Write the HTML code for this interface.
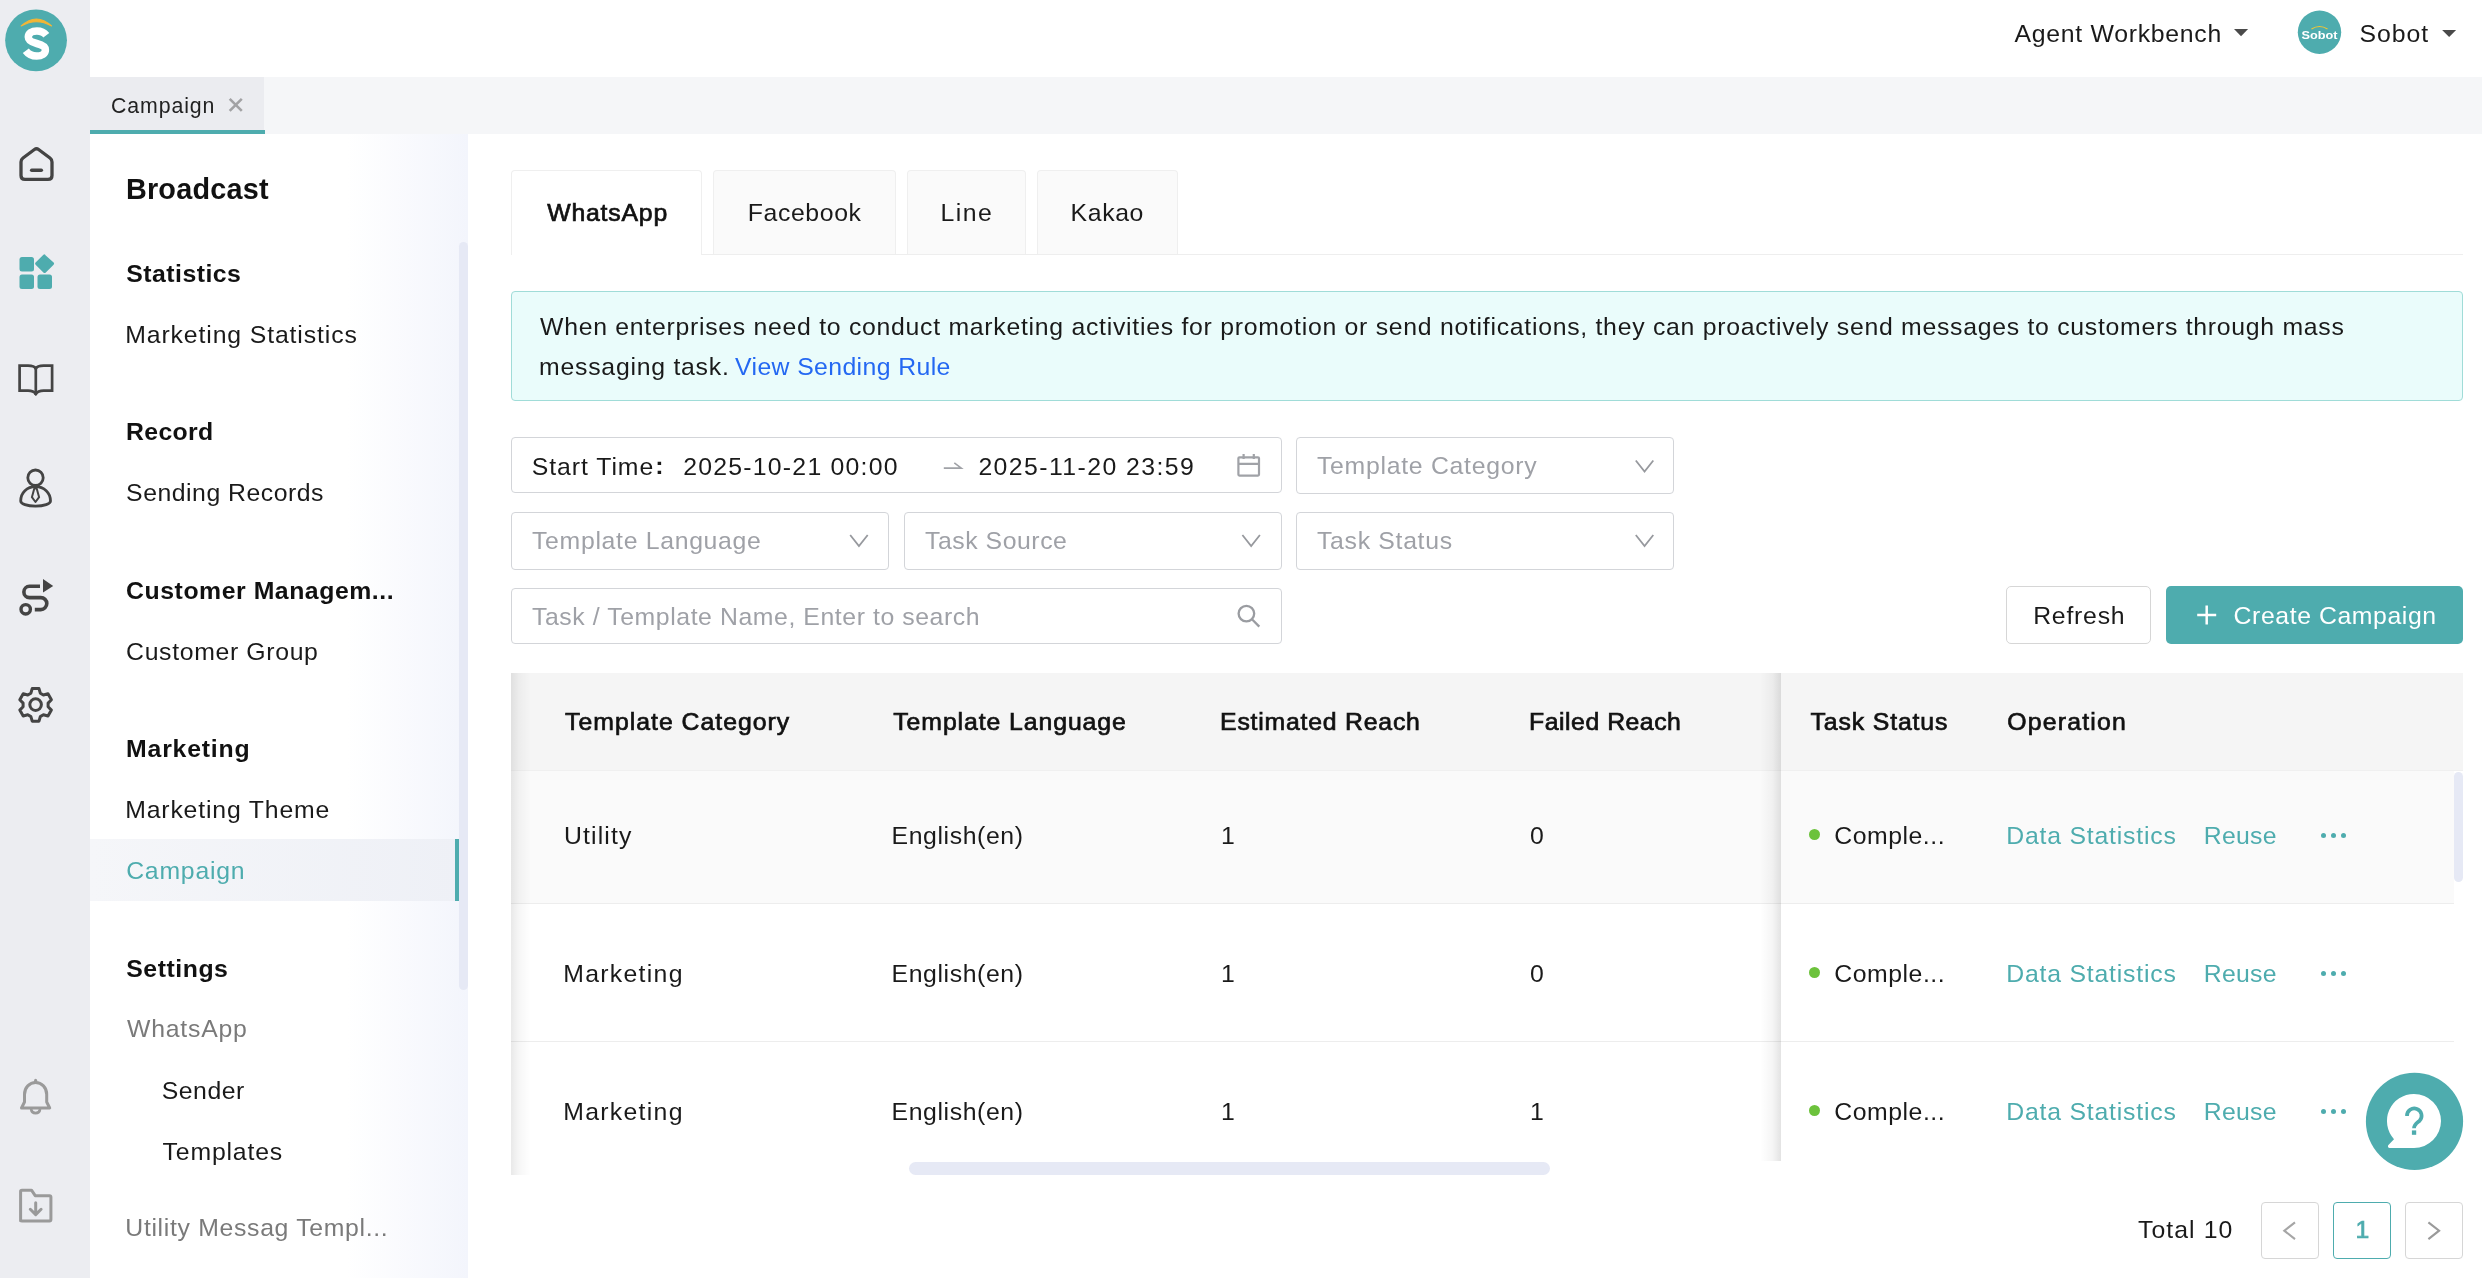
<!DOCTYPE html>
<html lang="en">
<head>
<meta charset="utf-8">
<title>Campaign - Broadcast</title>
<style>
*{box-sizing:border-box;margin:0;padding:0}
html,body{width:2482px;height:1278px;overflow:hidden;background:#fff}
body{font-family:"Liberation Sans",sans-serif;position:relative;color:#1a1a1a}
.abs,.t,.box,svg.ic{position:absolute}
.t{white-space:nowrap;line-height:1;display:block}
#rail{left:0;top:0;width:90px;height:1278px;background:#ecedf1}
#topbar{left:90px;top:0;width:2392px;height:77px;background:#fff}
#pagetabs{left:90px;top:77px;width:2392px;height:57px;background:#f5f6f8}
#pagetab{left:0;top:0;width:174px;height:53px;background:#ebecf0}
#pagetab:after{content:"";position:absolute;left:0;top:53px;width:175px;height:4px;background:#4eacae}
#sidebar{left:90px;top:134px;width:378px;height:1144px;background:linear-gradient(90deg,#fff 0%,#fff 68%,#f3f5fc 100%)}
#sb-active{left:0;top:705px;width:369px;height:62px;background:linear-gradient(90deg,#f5f6f9 0%,#eef0f6 100%)}
#sb-active:after{content:"";position:absolute;right:0;top:0;width:4px;height:62px;background:#4eacae}
#sb-scroll{left:369px;top:108px;width:9px;height:748px;border-radius:5px;background:#e6e9f5}
#main{left:468px;top:134px;width:2014px;height:1144px;background:#fff}
.ctab{top:170px;height:84px;border:1px solid #efefef;border-bottom:none;border-radius:4px 4px 0 0;background:#fafafa}
.ctab.on{background:#fff;height:85px}
#ctabline{left:511px;top:254px;width:1952px;height:1px;background:#eeeeee}
#alert{left:511px;top:291px;width:1952px;height:110px;background:#eafcfb;border:1px solid #a0dcd8;border-radius:4px}
.inp{border:1px solid #d3d5d9;border-radius:4px;background:#fff;height:56px}
.btn{border-radius:5px;height:58px;top:586px}
#thead{left:511px;top:673px;width:1952px;height:97.5px;background:#f5f5f5}
.row{left:511px;width:1943px;border-bottom:1px solid #ededed}
.dot{width:11.200px;height:11.200px;border-radius:50%;background:#6cc23c}
.more i{position:absolute;width:5px;height:5px;border-radius:50%;background:#4eacae;top:0}
.pg{top:1202px;width:58px;height:57px;border:1px solid #d6d6d6;border-radius:4px;background:#fff}
</style>
</head>
<body>
<div id="page">

<!-- ============ left icon rail ============ -->
<nav id="rail" class="abs">
<svg class="ic" style="left:0;top:0" width="90" height="1278" viewBox="0 0 90 1278" fill="none" stroke-linecap="round" stroke-linejoin="round">
  <!-- logo -->
  <circle cx="36.050" cy="40.350" r="30.900" fill="#4eacae"/>
  <path d="M21.200 26 Q36.400 12 51.600 26 Q36.400 17.400 21.200 26 Z" fill="#f2b635" stroke="#f2b635" stroke-width="1.100" stroke-linejoin="round"/>
  <path d="M46.300 35.200 C44 32.200 40.800 30.900 36.900 30.900 C31.800 30.900 28.300 33.400 28.300 37.100 C28.300 40.900 31.500 42.300 36.700 43.500 C42.100 44.800 45.400 46.300 45.400 50 C45.400 53.800 41.800 56.100 36.700 56.100 C32.100 56.100 28.300 54.200 25.800 50.800" stroke="#fff" stroke-width="7.500" stroke-linecap="butt" fill="none"/>
  <!-- home -->
  <g stroke="#444" stroke-width="3.3" transform="translate(0 0.900)">
    <path d="M21 161 L21 174.500 Q21 178.500 25 178.500 L48 178.500 Q52 178.500 52 174.500 L52 161 Q52 158.600 50 157.100 L38.600 148.600 Q36.500 147.100 34.400 148.600 L23 157.100 Q21 158.600 21 161 Z"/>
    <path d="M31.700 169.300 H41.300" stroke-width="3.600"/>
  </g>
  <!-- apps (active) -->
  <g fill="#4eacae" transform="translate(0 0.500)">
    <rect x="19.5" y="256.5" width="14.5" height="14.5" rx="2.5"/>
    <rect x="19.5" y="274" width="14.5" height="14.5" rx="2.5"/>
    <rect x="37.5" y="274" width="14.5" height="14.5" rx="2.5"/>
    <path d="M44.6 254 L53.6 262 Q54.6 263.1 53.6 264.2 L45.8 272 Q44.6 273 43.4 272 L35.6 264.2 Q34.6 263.1 35.6 262 L43.4 254.3 Q44.6 253.3 45.8 254.3 Z" transform="translate(0 0)"/>
  </g>
  <!-- book -->
  <g stroke="#444" stroke-width="2.700" stroke-linejoin="miter">
    <path d="M35.800 368.600 C34.800 366.600 32 365.700 28 365.700 H19.600 V390.600 H28 C32 390.600 34.300 391.600 35.800 394"/>
    <path d="M35.800 368.600 C36.800 366.600 39.600 365.700 43.600 365.700 H52.100 V390.600 H43.600 C39.600 390.600 37.300 391.600 35.800 394"/>
    <path d="M35.800 368.600 V394"/>
  </g>
  <!-- customer -->
  <g stroke="#444" stroke-width="2.800">
    <circle cx="35.500" cy="477.700" r="7.700"/>
    <path d="M20.700 501 C20.700 492.500 27 486.700 35.500 486.700 C44 486.700 50.500 492.500 50.500 501 C50.500 503.800 44 506.200 35.500 506.200 C27 506.200 20.700 503.800 20.700 501 Z"/>
    <path d="M34.300 488.600 H36.700 L39.100 497.200 L35.500 502 L31.900 497.200 Z" stroke-width="2"/>
  </g>
  <!-- flow -->
  <g stroke="#444" stroke-width="3.600">
    <path d="M40 586.300 H29.500 A5.650 5.650 0 0 0 29.500 597.600 H40.800 A6 6 0 0 1 40.800 609.600 H34.800" stroke-linecap="butt"/>
    <circle cx="25.700" cy="609.300" r="4.700" stroke-width="3.400"/>
    <path d="M43 579 L53.200 586 L43 592.400 Z" fill="#444" stroke="none"/>
  </g>
  <!-- settings gear -->
  <g stroke="#444" stroke-width="3">
    <circle cx="35.6" cy="704.6" r="5.8"/>
    <path d="M32.2 688.6 h6.8 l1.3 4.6 l3.1 1.8 l4.6 -1.2 l3.4 5.9 l-3.3 3.4 v3.6 l3.3 3.4 l-3.4 5.9 l-4.6 -1.2 l-3.1 1.8 l-1.3 4.6 h-6.8 l-1.3 -4.6 l-3.1 -1.8 l-4.6 1.2 l-3.4 -5.9 l3.3 -3.4 v-3.6 l-3.3 -3.4 l3.4 -5.9 l4.6 1.2 l3.1 -1.8 Z"/>
  </g>
  <!-- bell -->
  <g stroke="#9a9a9a" stroke-width="3">
    <path d="M21.5 1108 L24.5 1102 V1094.5 C24.5 1087.5 29.5 1082.5 35.6 1082.5 C41.700 1082.5 46.7 1087.5 46.7 1094.5 V1102 L49.700 1108 Z"/>
    <path d="M31.200 1109.500 C31.800 1114.300 39.400 1114.300 40 1109.500" stroke-width="2.600"/>
    <path d="M35.6 1080.3 V1081.5" stroke-width="3"/>
  </g>
  <!-- folder download -->
  <g stroke="#9a9a9a" stroke-width="3">
    <path d="M20.6 1220.700 V1191.5 Q20.6 1190.2 22 1190.2 H31.5 L35.2 1195.7 H49.5 Q50.9 1195.7 50.9 1197.1 V1219.500 Q50.9 1220.900 49.500 1220.900 H22 Q20.600 1220.900 20.600 1219.500"/>
    <path d="M35.700 1202.700 V1214.200 M30.300 1209.300 L35.700 1214.600 L41.100 1209.300"/>
  </g>
</svg>
</nav>

<!-- ============ top bar ============ -->
<header id="topbar" class="abs"></header>
<svg class="ic" style="left:2200px;top:0;will-change:transform" width="282" height="77" viewBox="2200 0 282 77">
  <path d="M2234 29.100 H2248.100 L2241.050 36.200 Z" fill="#4a4a4a"/>
  <path d="M2442.100 29.900 H2456.100 L2449.100 36.900 Z" fill="#4a4a4a"/>
  <circle cx="2319.500" cy="32.200" r="21.700" fill="#4eacae"/>
  <path d="M2311.500 29 Q2319.500 24 2327.500 29" stroke="#f2c631" stroke-width="1.2" fill="none"/>
  <text x="2319.500" y="38.800" text-anchor="middle" font-family="Liberation Sans, sans-serif" font-weight="700" font-size="11.600" fill="#fff" textLength="36" lengthAdjust="spacingAndGlyphs">Sobot</text>
</svg>

<!-- ============ page tabs ============ -->
<div id="pagetabs" class="abs"><div id="pagetab" class="abs"></div></div>
<svg class="ic" style="left:226px;top:95px" width="20" height="20" viewBox="0 0 20 20"><path d="M3.700 3.800 L15.800 15.900 M15.800 3.800 L3.700 15.900" stroke="#a2a2a4" stroke-width="2.600" stroke-linecap="butt"/></svg>

<!-- ============ sidebar ============ -->
<aside id="sidebar" class="abs">
  <div id="sb-active" class="abs"></div>
  <div id="sb-scroll" class="abs"></div>
</aside>

<!-- ============ main ============ -->
<main id="main" class="abs"></main>

<!-- channel tabs -->
<div id="ctabline" class="abs"></div>
<div class="ctab on abs" style="left:511px;width:191px"></div>
<div class="ctab abs" style="left:713px;width:183px"></div>
<div class="ctab abs" style="left:907px;width:119px"></div>
<div class="ctab abs" style="left:1037px;width:141px"></div>
<!-- alert -->
<div id="alert" class="abs"></div>
<!-- filters -->
<div class="inp abs" style="left:511px;top:437px;width:771px"></div>
<div class="inp abs" style="left:1296px;top:437px;width:378px;height:57px"></div>
<div class="inp abs" style="left:511px;top:512px;width:378px;height:58px"></div>
<div class="inp abs" style="left:904px;top:512px;width:378px;height:58px"></div>
<div class="inp abs" style="left:1296px;top:512px;width:378px;height:58px"></div>
<div class="inp abs" style="left:511px;top:588px;width:771px"></div>
<svg class="ic" style="left:500px;top:420px" width="1200" height="250" viewBox="500 420 1200 250" fill="none">
  <g stroke="#97999e" stroke-width="1.800">
    <path d="M1635.8 460.5 L1644.55 471.5 L1653.30 460.5" /><path d="M850.2 535 L858.95 546 L867.70 535" /><path d="M1242.4 535 L1251.15 546 L1259.90 535" /><path d="M1635.8 535 L1644.55 546 L1653.30 535" />
  </g>
  <!-- range arrow -->
  <path d="M943.800 468.100 H961.300 L954.300 462.900" stroke="#a0a2a7" stroke-width="1.600" stroke-linejoin="miter"/>
  <!-- calendar -->
  <g stroke="#a0a2a7" stroke-width="2.200">
    <rect x="1238.400" y="457.300" width="20.600" height="18.300" rx="1"/>
    <path d="M1238.400 463.800 H1259 M1243.600 454 V459 M1253.800 454 V459"/>
  </g>
  <!-- search -->
  <g stroke="#9a9ca1" stroke-width="2.300">
    <circle cx="1246.400" cy="613.600" r="7.800"/>
    <path d="M1252.200 619.500 L1259.300 626.600"/>
  </g>
</svg>
<!-- buttons -->
<div class="btn abs" style="left:2006px;width:144.5px;border:1px solid #d6d6d6;background:#fff"></div>
<div class="btn abs" style="left:2166px;width:297px;background:#4eacae"></div>
<svg class="ic" style="left:2196px;top:604px" width="22" height="22" viewBox="0 0 22 22"><path d="M1.200 11 H20.200 M10.700 1.500 V20.500" stroke="#fff" stroke-width="2.500"/></svg>
<!-- table -->
<div id="thead" class="abs"></div>
<div class="abs" style="left:511px;top:770px;width:1952px;height:1px;background:#f0f0f0"></div>
<div class="row abs" style="top:771px;height:133px;background:#fafafa"></div>
<div class="row abs" style="top:904px;height:138px"></div>
<!-- fixed-column shadows -->
<div class="abs" style="left:511px;top:673px;width:20px;height:502px;background:linear-gradient(90deg,rgba(0,0,0,.085),rgba(0,0,0,.035) 40%,rgba(0,0,0,0))"></div>
<div class="abs" style="left:1760px;top:673px;width:21px;height:487.500px;background:linear-gradient(270deg,rgba(0,0,0,.11),rgba(0,0,0,.04) 40%,rgba(0,0,0,0))"></div>
<!-- scrollbars -->
<div class="abs" style="left:2454px;top:772px;width:8.500px;height:110px;border-radius:4.500px;background:#e6e9f5"></div>
<div class="abs" style="left:909px;top:1161.500px;width:641px;height:13px;border-radius:6.500px;background:#e6e9f5"></div>
<!-- pagination -->
<div class="pg abs" style="left:2261px"></div>
<div class="pg abs" style="left:2333px;border-color:#4eacae"></div>
<div class="pg abs" style="left:2405px"></div>
<svg class="ic" style="left:2260px;top:1200px" width="210" height="62" viewBox="2260 1200 210 62" fill="none" stroke-width="2.100">
  <path d="M2295 1222.300 L2284.300 1230.700 L2295 1239.100" stroke="#a6a6a6"/>
  <path d="M2428.400 1222.300 L2439.100 1230.700 L2428.400 1239.100" stroke="#9a9a9a"/>
</svg>


<div id="txt" class="abs" style="left:0;top:0;width:2482px;height:1278px;will-change:transform">
<span class="t" style="left:2014.4px;top:22.03px;font-size:24.8px;font-weight:400;color:#1a1a1a;letter-spacing:0.727px;">Agent Workbench</span>
<span class="t" style="left:2359.5px;top:22.03px;font-size:24.8px;font-weight:400;color:#1a1a1a;letter-spacing:0.930px;">Sobot</span>
<span class="t" style="left:111.1px;top:96.03px;font-size:21.3px;font-weight:400;color:#222;letter-spacing:0.898px;">Campaign</span>
<span class="t" style="left:125.9px;top:175.03px;font-size:28.8px;font-weight:700;color:#111;letter-spacing:0.224px;">Broadcast</span>
<span class="t" style="left:126.2px;top:262.03px;font-size:24.8px;font-weight:700;color:#111;letter-spacing:0.494px;">Statistics</span>
<span class="t" style="left:125.2px;top:323.03px;font-size:24.8px;font-weight:400;color:#1a1a1a;letter-spacing:0.879px;">Marketing Statistics</span>
<span class="t" style="left:126.1px;top:420.03px;font-size:24.8px;font-weight:700;color:#111;letter-spacing:0.336px;">Record</span>
<span class="t" style="left:126.1px;top:481.03px;font-size:24.8px;font-weight:400;color:#1a1a1a;letter-spacing:0.514px;">Sending Records</span>
<span class="t" style="left:126.1px;top:579.03px;font-size:24.8px;font-weight:700;color:#111;letter-spacing:0.545px;">Customer Managem...</span>
<span class="t" style="left:126.1px;top:640.03px;font-size:24.8px;font-weight:400;color:#1a1a1a;letter-spacing:0.654px;">Customer Group</span>
<span class="t" style="left:126.1px;top:737.03px;font-size:24.8px;font-weight:700;color:#111;letter-spacing:0.797px;">Marketing</span>
<span class="t" style="left:125.2px;top:798.03px;font-size:24.8px;font-weight:400;color:#1a1a1a;letter-spacing:0.832px;">Marketing Theme</span>
<span class="t" style="left:126.2px;top:859.03px;font-size:24.8px;font-weight:400;color:#4eacae;letter-spacing:0.771px;">Campaign</span>
<span class="t" style="left:126.2px;top:957.03px;font-size:24.8px;font-weight:700;color:#111;letter-spacing:0.555px;">Settings</span>
<span class="t" style="left:127.0px;top:1017.03px;font-size:24.8px;font-weight:400;color:#7a7a7a;letter-spacing:0.785px;">WhatsApp</span>
<span class="t" style="left:161.7px;top:1079.03px;font-size:24.8px;font-weight:400;color:#1a1a1a;letter-spacing:0.539px;">Sender</span>
<span class="t" style="left:162.6px;top:1140.03px;font-size:24.8px;font-weight:400;color:#1a1a1a;letter-spacing:0.819px;">Templates</span>
<span class="t" style="left:125.3px;top:1216.03px;font-size:24.8px;font-weight:400;color:#7a7a7a;letter-spacing:0.674px;">Utility Messag Templ...</span>
<span class="t" style="left:547.2px;top:201.03px;font-size:24.8px;font-weight:400;color:#111;-webkit-text-stroke:0.7px #111;letter-spacing:0.802px;">WhatsApp</span>
<span class="t" style="left:747.7px;top:201.03px;font-size:24.8px;font-weight:400;color:#1a1a1a;letter-spacing:0.626px;">Facebook</span>
<span class="t" style="left:940.5px;top:201.03px;font-size:24.8px;font-weight:400;color:#1a1a1a;letter-spacing:1.456px;">Line</span>
<span class="t" style="left:1070.6px;top:201.03px;font-size:24.8px;font-weight:400;color:#1a1a1a;letter-spacing:0.621px;">Kakao</span>
<span class="t" style="left:540.0px;top:315.03px;font-size:24.8px;font-weight:400;color:#1a1a1a;letter-spacing:0.724px;">When enterprises need to conduct marketing activities for promotion or send notifications, they can proactively send messages to customers through mass</span>
<span class="t" style="left:539.1px;top:355.03px;font-size:24.8px;font-weight:400;color:#1a1a1a;letter-spacing:0.751px;">messaging task.</span>
<span class="t" style="left:735.0px;top:355.03px;font-size:24.8px;font-weight:400;color:#2468f2;letter-spacing:0.390px;">View Sending Rule</span>
<span class="t" style="left:531.7px;top:455.03px;font-size:24.8px;font-weight:400;color:#1a1a1a;letter-spacing:0.955px;">Start Time</span>
<span class="t" style="left:655.3px;top:454.03px;font-size:24.8px;font-weight:700;color:#1a1a1a;">:</span>
<span class="t" style="left:683.2px;top:455.03px;font-size:24.8px;font-weight:400;color:#1a1a1a;letter-spacing:1.239px;">2025-10-21 00:00</span>
<span class="t" style="left:978.4px;top:455.03px;font-size:24.8px;font-weight:400;color:#1a1a1a;letter-spacing:1.426px;">2025-11-20 23:59</span>
<span class="t" style="left:1317.0px;top:454.03px;font-size:24.8px;font-weight:400;color:#9fa1a7;letter-spacing:0.718px;">Template Category</span>
<span class="t" style="left:532.0px;top:529.03px;font-size:24.8px;font-weight:400;color:#9fa1a7;letter-spacing:0.688px;">Template Language</span>
<span class="t" style="left:925.0px;top:529.03px;font-size:24.8px;font-weight:400;color:#9fa1a7;letter-spacing:0.545px;">Task Source</span>
<span class="t" style="left:1317.0px;top:529.03px;font-size:24.8px;font-weight:400;color:#9fa1a7;letter-spacing:0.690px;">Task Status</span>
<span class="t" style="left:532.0px;top:605.03px;font-size:24.8px;font-weight:400;color:#9fa1a7;letter-spacing:0.577px;">Task / Template Name, Enter to search</span>
<span class="t" style="left:2033.2px;top:604.03px;font-size:24.8px;font-weight:400;color:#1a1a1a;letter-spacing:0.766px;">Refresh</span>
<span class="t" style="left:2233.6px;top:604.03px;font-size:24.8px;font-weight:400;color:#fff;letter-spacing:0.585px;">Create Campaign</span>
<span class="t" style="left:565.1px;top:710.03px;font-size:24.8px;font-weight:400;color:#111;-webkit-text-stroke:0.7px #111;letter-spacing:0.997px;">Template Category</span>
<span class="t" style="left:893.3px;top:710.03px;font-size:24.8px;font-weight:400;color:#111;-webkit-text-stroke:0.7px #111;letter-spacing:0.917px;">Template Language</span>
<span class="t" style="left:1220.1px;top:710.03px;font-size:24.8px;font-weight:400;color:#111;-webkit-text-stroke:0.7px #111;letter-spacing:0.784px;">Estimated Reach</span>
<span class="t" style="left:1529.1px;top:710.03px;font-size:24.8px;font-weight:400;color:#111;-webkit-text-stroke:0.7px #111;letter-spacing:0.517px;">Failed Reach</span>
<span class="t" style="left:1810.5px;top:710.03px;font-size:24.8px;font-weight:400;color:#111;-webkit-text-stroke:0.7px #111;letter-spacing:0.875px;">Task Status</span>
<span class="t" style="left:2007.2px;top:710.03px;font-size:24.8px;font-weight:400;color:#111;-webkit-text-stroke:0.7px #111;letter-spacing:1.223px;">Operation</span>
<span class="t" style="left:2138.0px;top:1218.03px;font-size:24.8px;font-weight:400;color:#1a1a1a;letter-spacing:1.061px;">Total 10</span>
<span class="t" style="left:2355.5px;top:1218.03px;font-size:24.8px;font-weight:400;color:#4eacae;-webkit-text-stroke:0.7px #4eacae;">1</span>
</div>
<div id="tbody" class="abs" style="left:0;top:0;width:2482px;height:1160.5px;overflow:hidden;will-change:transform">
<span class="t" style="left:563.9px;top:824.03px;font-size:24.8px;font-weight:400;color:#1a1a1a;letter-spacing:1.144px;">Utility</span>
<span class="t" style="left:891.6px;top:824.03px;font-size:24.8px;font-weight:400;color:#1a1a1a;letter-spacing:0.599px;">English(en)</span>
<span class="t" style="left:1221.0px;top:824.03px;font-size:24.8px;font-weight:400;color:#1a1a1a;">1</span>
<span class="t" style="left:1530.0px;top:824.03px;font-size:24.8px;font-weight:400;color:#1a1a1a;">0</span>
<span class="t" style="left:1834.3px;top:824.03px;font-size:24.8px;font-weight:400;color:#1a1a1a;letter-spacing:0.522px;">Comple...</span>
<span class="t" style="left:2006.2px;top:824.03px;font-size:24.8px;font-weight:400;color:#4eacae;letter-spacing:0.801px;">Data Statistics</span>
<span class="t" style="left:2203.7px;top:824.03px;font-size:24.8px;font-weight:400;color:#4eacae;letter-spacing:0.281px;">Reuse</span>
<span class="t" style="left:563.2px;top:962.03px;font-size:24.8px;font-weight:400;color:#1a1a1a;letter-spacing:1.300px;">Marketing</span>
<span class="t" style="left:891.6px;top:962.03px;font-size:24.8px;font-weight:400;color:#1a1a1a;letter-spacing:0.599px;">English(en)</span>
<span class="t" style="left:1221.0px;top:962.03px;font-size:24.8px;font-weight:400;color:#1a1a1a;">1</span>
<span class="t" style="left:1530.0px;top:962.03px;font-size:24.8px;font-weight:400;color:#1a1a1a;">0</span>
<span class="t" style="left:1834.3px;top:962.03px;font-size:24.8px;font-weight:400;color:#1a1a1a;letter-spacing:0.523px;">Comple...</span>
<span class="t" style="left:2006.2px;top:962.03px;font-size:24.8px;font-weight:400;color:#4eacae;letter-spacing:0.801px;">Data Statistics</span>
<span class="t" style="left:2203.7px;top:962.03px;font-size:24.8px;font-weight:400;color:#4eacae;letter-spacing:0.284px;">Reuse</span>
<span class="t" style="left:563.2px;top:1100.03px;font-size:24.8px;font-weight:400;color:#1a1a1a;letter-spacing:1.300px;">Marketing</span>
<span class="t" style="left:891.6px;top:1100.03px;font-size:24.8px;font-weight:400;color:#1a1a1a;letter-spacing:0.599px;">English(en)</span>
<span class="t" style="left:1221.0px;top:1100.03px;font-size:24.8px;font-weight:400;color:#1a1a1a;">1</span>
<span class="t" style="left:1530.0px;top:1100.03px;font-size:24.8px;font-weight:400;color:#1a1a1a;">1</span>
<span class="t" style="left:1834.3px;top:1100.03px;font-size:24.8px;font-weight:400;color:#1a1a1a;letter-spacing:0.523px;">Comple...</span>
<span class="t" style="left:2006.2px;top:1100.03px;font-size:24.8px;font-weight:400;color:#4eacae;letter-spacing:0.801px;">Data Statistics</span>
<span class="t" style="left:2203.7px;top:1100.03px;font-size:24.8px;font-weight:400;color:#4eacae;letter-spacing:0.284px;">Reuse</span>
<div class="dot abs" style="left:1809px;top:828.9px"></div>
<div class="more abs" style="left:2321px;top:832.8px;width:26px;height:5px"><i style="left:0"></i><i style="left:10.100px"></i><i style="left:20.200px"></i></div>
<div class="dot abs" style="left:1809px;top:966.9px"></div>
<div class="more abs" style="left:2321px;top:970.8px;width:26px;height:5px"><i style="left:0"></i><i style="left:10.100px"></i><i style="left:20.200px"></i></div>
<div class="dot abs" style="left:1809px;top:1104.9px"></div>
<div class="more abs" style="left:2321px;top:1108.8px;width:26px;height:5px"><i style="left:0"></i><i style="left:10.100px"></i><i style="left:20.200px"></i></div>

</div>
<!-- help bubble -->
<svg class="ic" style="left:2364px;top:1071px" width="102" height="102" viewBox="2364 1071 102 102">
  <circle cx="2414.500" cy="1121.400" r="48.600" fill="#4eacae"/>
  <path d="M2414 1094 A27 27 0 1 1 2414 1148 H2389.600 Q2387.300 1147.600 2388.200 1145.300 L2394 1139.200 A27 27 0 0 1 2414 1094 Z" fill="#fff"/>
  <path d="M2407 1116 A7.300 7.300 0 1 1 2419.600 1120.800 C2416.500 1123.300 2414 1124.600 2414 1128.300" stroke="#4eacae" stroke-width="3.700" fill="none"/>
  <rect x="2411.900" y="1130.400" width="4.300" height="4.400" fill="#4eacae"/>
</svg>
</div>
</body>
</html>
